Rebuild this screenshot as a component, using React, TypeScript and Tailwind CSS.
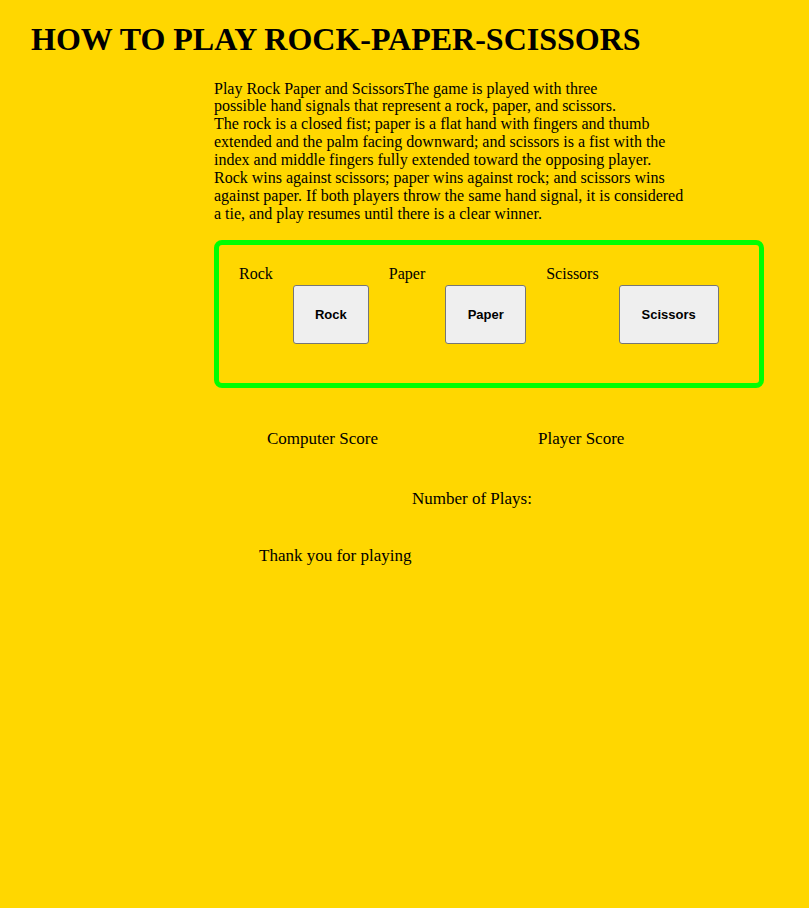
const choices = [
  { label: "Rock", width: "w-[76px]" },
  { label: "Paper", width: "w-[81px]" },
  { label: "Scissors", width: "w-[100px]" },
];

export default function App() {
  return (
    <div className="min-h-screen bg-[#ffd700] font-['Liberation_Serif',serif] text-black">
      <h1 className="pt-[21px] pl-[31px] text-[32px] font-bold leading-[36px]">
        HOW TO PLAY ROCK-PAPER-SCISSORS
      </h1>

      <div className="pl-[214px]">
        <p className="mt-[22.5px] text-[16px] leading-[17.9px] whitespace-nowrap">
          Play Rock Paper and ScissorsThe game is played with three
          <br />
          possible hand signals that represent a rock, paper, and scissors.
          <br />
          The rock is a closed fist; paper is a flat hand with fingers and thumb
          <br />
          extended and the palm facing downward; and scissors is a fist with the
          <br />
          index and middle fingers fully extended toward the opposing player.
          <br />
          Rock wins against scissors; paper wins against rock; and scissors wins
          <br />
          against paper. If both players throw the same hand signal, it is considered
          <br />
          a tie, and play resumes until there is a clear winner.
        </p>

        {/* choice panel */}
        <div className="mt-[17.6px] flex h-[148px] w-[550px] items-start gap-5 rounded-[8px] border-[5px] border-[#0f0] pl-5 pt-[20px]">
          {choices.map((c) => (
            <div key={c.label} className="flex items-start gap-5">
              <span className="text-[16px] leading-[18px]">{c.label}</span>
              <button
                className={`mt-[20px] h-[59px] ${c.width} rounded-[3px] border border-[#767676] bg-[#efefef] font-['Liberation_Sans',Arial,sans-serif] text-[13px] font-bold text-black`}
              >
                {c.label}
              </button>
            </div>
          ))}
        </div>

        <div className="mt-[40.8px] flex gap-[160px] pl-[53px] text-[17px] leading-[19px]">
          <span>Computer Score</span>
          <span>Player Score</span>
        </div>

        <p className="mt-[41px] pl-[198px] text-[17px] leading-[19px]">Number of Plays:</p>

        <p className="mt-[38px] pl-[45px] text-[17px] leading-[19px]">Thank you for playing</p>
      </div>
    </div>
  );
}
